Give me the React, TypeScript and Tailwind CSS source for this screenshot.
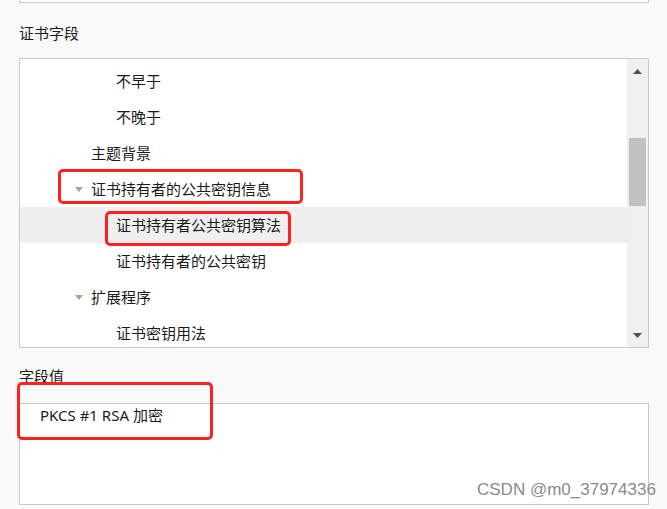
import React from 'react'

interface Row {
  label: string;
  level: 2 | 3;
  expanded?: boolean;
  selected?: boolean;
}

const rows: Row[] = [
  { label: '不早于', level: 3 },
  { label: '不晚于', level: 3 },
  { label: '主题背景', level: 2 },
  { label: '证书持有者的公共密钥信息', level: 2, expanded: true },
  { label: '证书持有者公共密钥算法', level: 3, selected: true },
  { label: '证书持有者的公共密钥', level: 3 },
  { label: '扩展程序', level: 2, expanded: true },
  { label: '证书密钥用法', level: 3 },
]

const font = { fontFamily: '"Noto Sans", "Noto Sans CJK SC", sans-serif' }

const Caret = () => (
  <svg width="8" height="5" viewBox="0 0 8 5" className="mr-[8px] shrink-0">
    <path d="M0 0 L8 0 L4 5 Z" fill="#a3a3a3" />
  </svg>
)

const Arrow = ({ up }: { up?: boolean }) => (
  <div className="h-[24px] flex items-center justify-center">
    <svg width="9" height="5" viewBox="0 0 9 5">
      <path d={up ? 'M0 5 L9 5 L4.5 0 Z' : 'M0 0 L9 0 L4.5 5 Z'} fill="#505050" />
    </svg>
  </div>
)

const TreeRow: React.FC<Row> = ({ label, level, expanded, selected }) => (
  <div className={`h-[36px] flex items-center ${selected ? 'bg-[#efefef]' : ''}`}>
    {level === 3 ? (
      <div className="pl-[96px]">{label}</div>
    ) : (
      <div className={`flex items-center ${expanded ? 'pl-[55px]' : 'pl-[71px]'}`}>
        {expanded && <Caret />}
        <span>{label}</span>
      </div>
    )}
  </div>
)

export default function App() {
  return (
    <div className="relative w-[667px] h-[509px] overflow-hidden bg-[#f9f9f9] text-[15px] leading-[20px] text-[#1a1a1a]" style={font}>
      <div className="pl-[19px] w-[649px]">
        {/* 上一个框的底部 */}
        <div className="h-[3px] bg-white border-x border-b border-[#c9c9c9]" />

        <div className="mt-[20px]">证书字段</div>

        {/* 字段树 */}
        <div className="mt-[15px] h-[290px] flex bg-white border border-[#c9c9c9]">
          <div className="flex-1 overflow-hidden pt-[4px]">
            {rows.map((r) => (
              <TreeRow key={r.label} {...r} />
            ))}
          </div>
          <div className="w-[21px] bg-[#f0f0f0] flex flex-col">
            <Arrow up />
            <div className="mt-[55px] ml-[2px] w-[17px] h-[68px] bg-[#c1c1c1]" />
            <div className="flex-1" />
            <Arrow />
          </div>
        </div>

        <div className="mt-[18px]">字段值</div>

        <div className="mt-[17px] h-[102px] bg-white border border-[#c9c9c9] pt-[1px] pl-[20px]">
          PKCS #1 RSA 加密
        </div>
      </div>

      {/* 标注 */}
      <div className="absolute left-[58px] top-[169px] w-[245px] h-[35px] border-[3px] border-[#ff2121] rounded-[5px]" />
      <div className="absolute left-[105px] top-[211px] w-[186px] h-[35px] border-[3px] border-[#ff2121] rounded-[5px]" />
      <div className="absolute left-[17px] top-[382px] w-[196px] h-[58px] border-[3px] border-[#ff2121] rounded-[5px]" />

      <div
        className="absolute left-[477px] top-[480px] text-[17px] leading-[20px] text-[#8a8a8a] [text-shadow:0_0_2px_#fff]"
        style={{ fontFamily: '"Liberation Sans", Arial, sans-serif' }}
      >
        CSDN @m0_37974336
      </div>
    </div>
  )
}
